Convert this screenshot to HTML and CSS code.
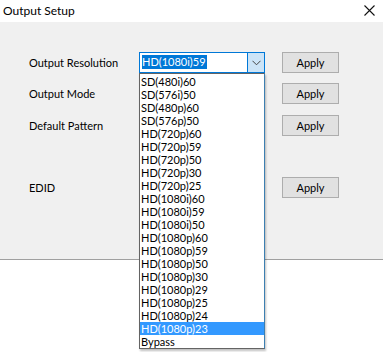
FILE: index.html
```html
<!DOCTYPE html>
<html lang="en">

<head>
    <meta charset="UTF-8">
    <title>Output Setup</title>
    <link rel="stylesheet" href="styles.css">
</head>

<body>
    <div class="window">
        <div class="titlebar">
            <span class="title">Output Setup</span>
            <svg class="close" width="11" height="11" viewBox="0 0 11 11">
                <path d="M0.5 0.5 L10.5 10.5 M10.5 0.5 L0.5 10.5" stroke="#111" stroke-width="1.1" fill="none" />
            </svg>
        </div>

        <div class="panel">
            <div class="row row-res">
                <label>Output Resolution</label>
                <div class="combo">
                    <span class="combo-value"><span class="sel">HD(1080i)59</span></span>
                    <span class="combo-btn">
                        <svg width="9" height="6" viewBox="0 0 9 6">
                            <path d="M0.5 0.8 L4.5 4.8 L8.5 0.8" stroke="#444" stroke-width="1" fill="none" />
                        </svg>
                    </span>
                </div>
                <button>Apply</button>
            </div>
            <div class="row row-mode">
                <label>Output Mode</label>
                <div class="spacer"></div>
                <button>Apply</button>
            </div>
            <div class="row row-pattern">
                <label>Default Pattern</label>
                <div class="spacer"></div>
                <button>Apply</button>
            </div>
            <div class="row row-edid">
                <label>EDID</label>
                <div class="spacer"></div>
                <button>Apply</button>
            </div>

            <ul class="dropdown">
                <li>SD(480i)60</li>
                <li>SD(576i)50</li>
                <li>SD(480p)60</li>
                <li>SD(576p)50</li>
                <li>HD(720p)60</li>
                <li>HD(720p)59</li>
                <li>HD(720p)50</li>
                <li>HD(720p)30</li>
                <li>HD(720p)25</li>
                <li>HD(1080i)60</li>
                <li>HD(1080i)59</li>
                <li>HD(1080i)50</li>
                <li>HD(1080p)60</li>
                <li>HD(1080p)59</li>
                <li>HD(1080p)50</li>
                <li>HD(1080p)30</li>
                <li>HD(1080p)29</li>
                <li>HD(1080p)25</li>
                <li>HD(1080p)24</li>
                <li class="active">HD(1080p)23</li>
                <li>Bypass</li>
            </ul>
        </div>
    </div>
</body>

</html>
```

FILE: styles.css
```css
body {
    margin: 0;
    padding: 0;
    background-color: #fff;
    font-family: Lato, "Noto Sans", sans-serif;
    font-size: 11px;
    color: #000;
}

.window {
    width: 383px;
    height: 352px;
    overflow: hidden;
}

.titlebar {
    height: 22px;
    display: flex;
    align-items: center;
    justify-content: space-between;
    padding: 0 8px 0 3px;
    background-color: #fff;
}

.title {
    font-size: 12px;
    margin-top: -2px;
}

.close {
    margin-top: -2px;
}

.panel {
    position: relative;
    height: 237px;
    background-color: #f0f0f0;
    border-bottom: 1px solid #a0a0a0;
    padding-left: 29px;
}

.row {
    display: flex;
    align-items: center;
}

.row label {
    width: 110px;
}

.row-res {
    padding-top: 30px;
    height: 21px;
}

.row-mode {
    margin-top: 10px;
    height: 21px;
}

.row-pattern {
    margin-top: 11px;
    height: 21px;
}

.row-edid {
    margin-top: 41px;
    height: 21px;
}

.combo,
.spacer {
    width: 126px;
    height: 21px;
    box-sizing: border-box;
}

.combo {
    display: flex;
    border: 1px solid #0078d7;
    background-color: #fff;
}

.combo-value {
    flex: 1;
    padding: 2px 0 0 2px;
}

.sel {
    display: inline-block;
    background-color: #0078d7;
    color: #fff;
    line-height: 14px;
    padding-right: 1px;
}

.combo-btn {
    width: 16px;
    display: flex;
    align-items: center;
    justify-content: center;
    background-color: #cce4f7;
    border-left: 1px solid #0078d7;
}

button {
    margin-left: 17px;
    width: 57px;
    height: 21px;
    padding: 0;
    background-color: #e1e1e1;
    border: 1px solid #adadad;
    font-family: inherit;
    font-size: 11px;
    color: #000;
}

.dropdown {
    position: absolute;
    left: 139px;
    top: 51px;
    width: 126px;
    box-sizing: border-box;
    margin: 0;
    padding: 1px 0 0;
    list-style: none;
    background-color: #fff;
    border: 1px solid #646464;
    border-right-color: #3c7fb1;
    box-shadow: 1px 2px 2px rgba(0, 0, 0, 0.25);
}

.dropdown li {
    height: 13px;
    line-height: 13px;
    padding-left: 1px;
}

.dropdown li.active {
    background-color: #3399ff;
    color: #fff;
}
```
